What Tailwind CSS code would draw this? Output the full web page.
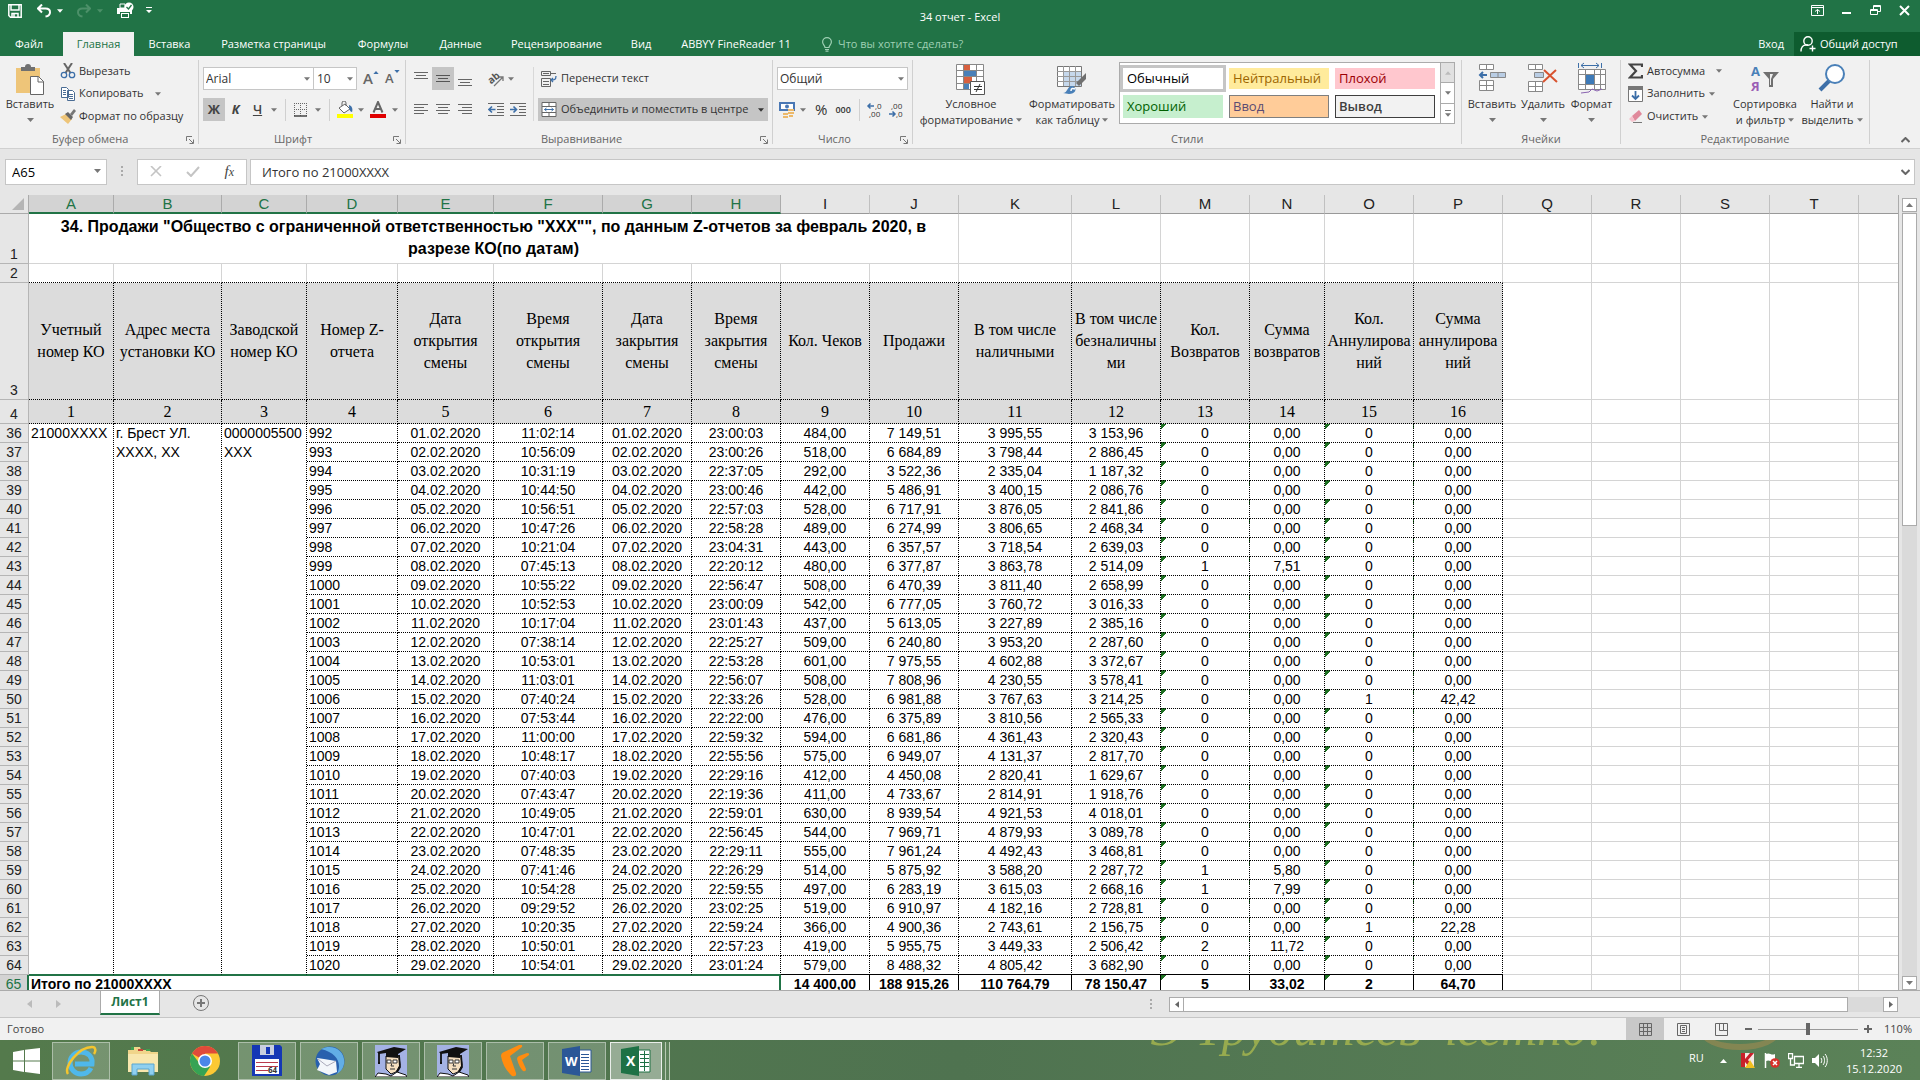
<!DOCTYPE html>
<html lang="ru">
<head>
<meta charset="utf-8">
<title>34 отчет - Excel</title>
<script src="https://cdn.jsdelivr.net/npm/@tailwindcss/browser@4"></script>
</head>
<body class="flex h-screen flex-col overflow-hidden bg-[#e6e6e6] font-['Open_Sans',sans-serif] text-[11px] text-[#333]">
<svg class="hidden">
  <symbol id="dn" viewBox="0 0 7 4"><path d="M0 0h7L3.5 4z" fill="currentColor"/></symbol>
  <symbol id="launch" viewBox="0 0 8 8"><path d="M.5 5V.5H6M3 3l4 4M7.500 3.500v4h-4" fill="none" stroke="#777"/></symbol>
</svg>

<header class="shrink-0 bg-[#217346] text-white">
  <div class="grid h-8 grid-cols-[1fr_auto_1fr] items-center">
    <div class="flex items-center self-start pt-[2px] pl-2">
      <button aria-label="Сохранить" class="mr-[15px]"><svg class="h-[14px] w-[14px]" viewBox="0 0 14 14" fill="none" stroke="#fff" stroke-width="1.500"><path d="M.8.800h12.400v12.400H2.500L.8 11.500zM3 1v5h8V1M4 13V9.500h6V13M6 10v3"/></svg></button>
      <button aria-label="Отменить" class="mr-[6px]"><svg class="h-[14px] w-[14px]" viewBox="0 0 14 14" fill="none" stroke="#fff" stroke-width="2"><path d="M1 4.500h7.500c6 0 6 7 0 8M5 .5L1 4.500l4 4"/></svg></button>
      <svg class="mr-[14px] h-1 w-[6px]"><use href="#dn"/></svg>
      <button aria-label="Вернуть" class="mr-[6px] text-[#4c9069]"><svg class="h-[14px] w-[14px]" viewBox="0 0 14 14" fill="none" stroke="currentColor" stroke-width="2"><path d="M13 4.500H5.500c-6 0-6 7 0 8M9 .5l4 4-4 4"/></svg></button>
      <svg class="mr-[14px] h-1 w-[6px] text-[#4c9069]"><use href="#dn"/></svg>
      <button aria-label="Просмотр и печать" class="mr-3"><svg class="h-[17px] w-[17px]" viewBox="0 0 17 17"><path d="M0 6h15v6h-2v-2H3v2H0zM4 11h8v5H4z" fill="#fff"/><path d="M5 12h6v3H5z" fill="#217346"/><path d="M3 2h5v4H3z" fill="none" stroke="#fff"/><circle cx="12" cy="5" r="4.500" fill="#fff"/><path d="M9.500 5l2 2 3-4" fill="none" stroke="#217346" stroke-width="1.300"/></svg></button>
      <svg class="h-[7px] w-[7px]" viewBox="0 0 7 7" fill="#fff"><path d="M0 0h6v1H0zM0 3h6L3 6z"/></svg>
    </div>
    <h1 class="pt-[2px]">34 отчет - Excel</h1>
    <div class="flex items-center justify-end gap-[18px] self-start pt-[5px] pr-[10px]">
      <button aria-label="Параметры ленты"><svg class="h-[11px] w-[13px]" viewBox="0 0 13 11" fill="none" stroke="#fff"><path d="M.5.500h12v10H.5zM.5 2.500h12M6.500 9V4.500M4 6.500l2.500-2L9 6.500"/></svg></button>
      <button aria-label="Свернуть"><svg class="h-[11px] w-[10px]" viewBox="0 0 10 11"><path d="M0 7h9v2H0z" fill="#fff"/></svg></button>
      <button aria-label="Восстановить"><svg class="h-[11px] w-[11px]" viewBox="0 0 11 11" fill="none" stroke="#fff"><path d="M.5 4.500h7v5h-7zM.5 5.500h7M3.500 4V.500h7v6H8M3 1.500h7"/></svg></button>
      <button aria-label="Закрыть"><svg class="h-[11px] w-[11px]" viewBox="0 0 11 11" stroke="#fff" stroke-width="2"><path d="M1 1l9 9M10 1l-9 9"/></svg></button>
    </div>
  </div>
  <nav class="flex h-6 items-center whitespace-nowrap">
    <a href="#" class="w-[63px] pl-[15px]">Файл</a>
    <a href="#" class="flex h-6 w-[71px] items-center justify-center bg-[#f1f1f1] text-[#217346]">Главная</a>
    <a href="#" class="w-[71px] text-center">Вставка</a>
    <a href="#" class="w-[137px] text-center">Разметка страницы</a>
    <a href="#" class="w-[82px] text-center">Формулы</a>
    <a href="#" class="w-[73px] text-center">Данные</a>
    <a href="#" class="w-[119px] text-center">Рецензирование</a>
    <a href="#" class="w-[50px] text-center">Вид</a>
    <a href="#" class="w-[140px] text-center">ABBYY FineReader 11</a>
    <a href="#" class="ml-4 flex items-center gap-[6px] text-[#9fd0b4]"><svg class="h-[15px] w-[10px]" viewBox="0 0 10 15" fill="none" stroke="currentColor" stroke-width="1.200"><path d="M3 10.500c0-2-2.400-3-2.400-5.500a4.400 4.400 0 018.800 0c0 2.500-2.400 3.500-2.400 5.500zM3 12.500h4M3.500 14.200h3"/></svg>Что вы хотите сделать?</a>
    <a href="#" class="mr-[10px] ml-auto">Вход</a>
    <a href="#" class="flex h-6 w-[126px] items-center gap-1 bg-[#0e5c2f] pl-[6px]"><svg class="h-4 w-4" viewBox="0 0 16 16" fill="none" stroke="#fff" stroke-width="1.400"><circle cx="8" cy="5" r="4.200"/><path d="M1 15.500c0-4 2-6.500 5-6.500h2M12.500 9.500v6M9.500 12.500h6"/></svg>Общий доступ</a>
  </nav>
</header>

<section class="flex h-[93px] shrink-0 border-b border-[#d0d0d0] bg-[#f1f1f1] pt-1 whitespace-nowrap">
  <!-- Буфер обмена -->
  <div class="w-[198px] shrink-0">
    <div class="flex h-[71px]">
      <button class="flex w-[54px] flex-col items-center pt-1 pl-[6px]"><svg class="h-[31px] w-7 shrink-0" viewBox="0 0 28 31"><path d="M0 4h24v25H0z" fill="#eec579"/><path d="M5 3h4a3 3 0 016 0h4v4H5z" fill="#707070"/><path d="M14.500 12.500h8l5 5v13h-13z" fill="#fff" stroke="#666"/><path d="M22 12v6h6" fill="none" stroke="#666"/></svg><span class="mt-[1px] leading-4">Вставить</span><svg class="mt-[6px] h-1 w-[7px] text-[#777]"><use href="#dn"/></svg></button>
      <div class="flex flex-col pl-[6px]">
        <button class="flex h-[22px] items-center gap-[3px]"><svg class="h-4 w-4" viewBox="0 0 16 16" fill="none"><path d="M4 0l6.500 10M12 0L5.500 10" stroke="#666" stroke-width="2"/><circle cx="4" cy="12" r="2.700" stroke="#3d6fa8" stroke-width="1.300"/><circle cx="12" cy="12" r="2.700" stroke="#3d6fa8" stroke-width="1.300"/></svg>Вырезать</button>
        <button class="flex h-[23px] items-center gap-[3px]"><svg class="h-4 w-4" viewBox="0 0 16 16" fill="#fff" stroke="#4a6c94"><path d="M1.500 1.500h5l2 2v8h-7zM3 4.500h3M3 6.500h3M3 8.500h3M7.500 4.500h5l2 2v8h-7zM9 8.500h4M9 10.500h4M9 12.500h4"/></svg>Копировать<svg class="ml-2 h-1 w-[6px] text-[#777]"><use href="#dn"/></svg></button>
        <button class="flex h-[23px] items-center gap-[3px]"><svg class="h-4 w-4" viewBox="0 0 16 16"><path d="M0 8l6-3 6 5-4 5z" fill="#eec579"/><path d="M5 5l3-2 5 5-2 3z" fill="#666"/><path d="M10 5l4-5 2 2-4 5z" fill="#777"/></svg>Формат по образцу</button>
      </div>
    </div>
    <div class="flex h-[17px] items-center pl-[52px] text-[#666]">Буфер обмена<svg class="mr-1 ml-auto h-2 w-2"><use href="#launch"/></svg></div>
  </div>
  <div class="h-[84px] w-px bg-[#d0d0d0]"></div>
  <!-- Шрифт -->
  <div class="w-[206px] shrink-0">
    <div class="flex h-[71px] flex-col gap-2 pt-[7px] pl-1">
      <div class="flex h-[23px] items-center">
        <div class="relative"><select aria-label="Шрифт" class="h-[23px] w-[111px] appearance-none border border-[#c6c6c6] bg-white pl-[2px] text-xs"><option>Arial</option></select><svg class="pointer-events-none absolute top-[10px] right-1 h-1 w-[6px] text-[#777]"><use href="#dn"/></svg></div>
        <div class="relative"><select aria-label="Размер шрифта" class="h-[23px] w-[43px] appearance-none border border-l-0 border-[#c6c6c6] bg-white pl-[3px] text-xs"><option>10</option></select><svg class="pointer-events-none absolute top-[10px] right-1 h-1 w-[6px] text-[#777]"><use href="#dn"/></svg></div>
        <button class="ml-[6px] flex text-[15px] leading-[15px] font-semibold text-[#666]">A<svg class="h-[3px] w-[6px] rotate-180 text-[#3d6fa8]"><use href="#dn"/></svg></button>
        <button class="ml-[6px] flex items-start text-[13px] leading-[17px] font-semibold text-[#666]">A<svg class="h-[3px] w-[6px] text-[#3d6fa8]"><use href="#dn"/></svg></button>
      </div>
      <div class="flex h-[23px] items-center text-[#777]">
        <button class="h-[23px] w-[22px] bg-[#c5c5c5] text-[13px] font-bold text-[#444]">Ж</button>
        <button class="w-[21px] text-[13px] font-bold text-[#444] italic">К</button>
        <button class="w-[23px] text-[13px] font-semibold text-[#444] underline">Ч</button>
        <svg class="ml-[2px] h-1 w-[6px]"><use href="#dn"/></svg>
        <div class="ml-2 h-[22px] w-px bg-[#d0d0d0]"></div>
        <svg class="ml-2 h-[14px] w-[14px]" viewBox="0 0 14 14" fill="none" stroke="#666"><path d="M.5 0v13M6.500 0v13M12.500 0v13M0 .5h13M0 6.500h13" stroke-dasharray="1 1"/><path d="M0 13h13" stroke="#444" stroke-width="1.500"/></svg>
        <svg class="ml-[7px] h-1 w-[6px]"><use href="#dn"/></svg>
        <div class="ml-2 h-[22px] w-px bg-[#d0d0d0]"></div>
        <svg class="ml-[7px] h-[17px] w-4" viewBox="0 0 16 17"><path d="M2 7l6-4 5 5-6 4z" fill="#fff" stroke="#666"/><path d="M5 5V2a2 2 0 014 0v3" fill="none" stroke="#666"/><path d="M12 4c3 1 4 4 3 7-2 0-3-3-3-7" fill="#3d6fa8"/><path d="M0 13h16v4H0z" fill="#ff0"/></svg>
        <svg class="ml-[5px] h-1 w-[6px]"><use href="#dn"/></svg>
        <svg class="ml-[6px] h-[17px] w-4" viewBox="0 0 16 17"><path d="M3.500 11.500L8 1l4.500 10.500M5 8h6" fill="none" stroke="#666" stroke-width="2"/><path d="M0 13h16v4H0z" fill="#e00000"/></svg>
        <svg class="ml-[6px] h-1 w-[6px]"><use href="#dn"/></svg>
      </div>
    </div>
    <div class="flex h-[17px] items-center pl-[75px] text-[#666]">Шрифт<svg class="mr-1 ml-auto h-2 w-2"><use href="#launch"/></svg></div>
  </div>
  <div class="h-[84px] w-px bg-[#d0d0d0]"></div>
  <!-- Выравнивание -->
  <div class="w-[366px] shrink-0">
    <div class="flex h-[71px] pt-[7px]">
      <div class="flex w-[127px] flex-col gap-2 pl-1">
        <div class="flex h-[23px] items-center">
          <button aria-label="По верхнему краю" class="flex h-[23px] w-[22px] items-center justify-center"><svg class="h-[16px] w-[14px]" viewBox="0 0 14 16" stroke="#666"><path d="M0 1.500h14M2 4.500h10M0 7.500h14"/></svg></button>
          <button aria-label="По середине" class="flex h-[23px] w-[22px] items-center justify-center bg-[#c5c5c5]"><svg class="h-[16px] w-[14px]" viewBox="0 0 14 16" stroke="#555"><path d="M0 4.500h14M2 7.500h10M0 10.500h14"/></svg></button>
          <button aria-label="По нижнему краю" class="flex h-[23px] w-[22px] items-center justify-center"><svg class="h-[16px] w-[14px]" viewBox="0 0 14 16" stroke="#666"><path d="M0 8.500h14M2 11.500h10M0 14.500h14"/></svg></button>
          <button aria-label="Ориентация" class="ml-3"><svg class="h-4 w-4 overflow-visible" viewBox="0 0 16 16"><text x="0" y="11" font-size="10" font-weight="bold" fill="#555" transform="rotate(-40 5 8)">ab</text><path d="M6 15l9-9M11 6h4v4" fill="none" stroke="#777" stroke-width="1.300"/></svg></button>
          <svg class="ml-1 h-1 w-[6px] text-[#777]"><use href="#dn"/></svg>
        </div>
        <div class="flex h-[23px] items-center">
          <button aria-label="По левому краю" class="flex w-[22px] justify-center"><svg class="h-[13px] w-[14px]" viewBox="0 0 14 13" stroke="#666"><path d="M0 1.500h14M0 4.500h10M0 7.500h14M0 10.500h10"/></svg></button>
          <button aria-label="По центру" class="flex w-[22px] justify-center"><svg class="h-[13px] w-[14px]" viewBox="0 0 14 13" stroke="#666"><path d="M0 1.500h14M2 4.500h10M0 7.500h14M2 10.500h10"/></svg></button>
          <button aria-label="По правому краю" class="flex w-[22px] justify-center"><svg class="h-[13px] w-[14px]" viewBox="0 0 14 13" stroke="#666"><path d="M0 1.500h14M4 4.500h10M0 7.500h14M4 10.500h10"/></svg></button>
          <button aria-label="Уменьшить отступ" class="ml-3"><svg class="h-[13px] w-4" viewBox="0 0 16 13" fill="none" stroke="#666"><path d="M0 .5h16M9 3.500h7M9 6.500h7M9 9.500h7M0 12.500h16"/><path d="M7.500 6.500H1M4 3.500l-3 3 3 3" stroke="#3d6fa8" stroke-width="1.600"/></svg></button>
          <button aria-label="Увеличить отступ" class="ml-[6px]"><svg class="h-[13px] w-4" viewBox="0 0 16 13" fill="none" stroke="#666"><path d="M0 .5h16M9 3.500h7M9 6.500h7M9 9.500h7M0 12.500h16"/><path d="M0 6.500h6.500M3.500 3.500l3 3-3 3" stroke="#3d6fa8" stroke-width="1.600"/></svg></button>
        </div>
      </div>
      <div class="h-[54px] w-px bg-[#d8d8d8]"></div>
      <div class="flex flex-col gap-2 pl-1">
        <button class="flex h-[23px] items-center gap-1 pl-[3px]"><svg class="h-4 w-4 shrink-0" viewBox="0 0 16 16" fill="none" stroke="#666"><path d="M.5.500h9v4h-9zM10 2.500h5M.5 7.500h9v8h-9zM2 10.500h6M2 13.500h6M2 2.500h6"/><path d="M15 5c0 4-2 4-5 4M12 7l-2 2 2 2" stroke="#3d6fa8" stroke-width="1.300"/></svg>Перенести текст</button>
        <button class="flex h-[23px] w-[230px] items-center gap-1 bg-[#c5c5c5] pl-[3px]"><svg class="h-[15px] w-4 shrink-0" viewBox="0 0 15 15" fill="#fff" stroke="#666"><path d="M.5.500h14v14H.5zM.5 4.500h14M.5 10.500h14M7.500 1v3M7.500 11v3"/><path d="M3 7.500h9M5 6L3 7.500 5 9M10 6l2 1.500L10 9" stroke="#3d6fa8" fill="none"/></svg>Объединить и поместить в центре<svg class="mr-1 ml-auto h-1 w-[6px] shrink-0"><use href="#dn"/></svg></button>
      </div>
    </div>
    <div class="flex h-[17px] items-center pl-[135px] text-[#666]">Выравнивание<svg class="mr-1 ml-auto h-2 w-2"><use href="#launch"/></svg></div>
  </div>
  <div class="h-[84px] w-px bg-[#d0d0d0]"></div>
  <!-- Число -->
  <div class="w-[139px] shrink-0">
    <div class="flex h-[71px] flex-col gap-2 pt-[7px] pl-1">
      <div class="relative w-[131px]"><select aria-label="Числовой формат" class="h-[23px] w-full appearance-none border border-[#c6c6c6] bg-white pl-[2px] text-xs"><option>Общий</option></select><svg class="pointer-events-none absolute top-[10px] right-1 h-1 w-[6px] text-[#777]"><use href="#dn"/></svg></div>
      <div class="flex h-[23px] items-center pl-[2px]">
        <svg class="h-4 w-4" viewBox="0 0 16 16"><path d="M1 1h14v7H1z" fill="#fff" stroke="#4a78b5" stroke-width="2"/><circle cx="8" cy="4.500" r="2" fill="#4a78b5"/><path d="M9 7h6v2H9zM9 10h6v2H9zM4 11h5v2H4zM4 14h5v2H4zM10 13h4v2h-4z" fill="#ecb96b"/></svg>
        <svg class="ml-[5px] h-1 w-[6px] text-[#777]"><use href="#dn"/></svg>
        <button class="ml-[9px] text-[15px]">%</button>
        <button class="ml-2 text-[9px] font-semibold">000</button>
        <div class="ml-2 h-[22px] w-px bg-[#d0d0d0]"></div>
        <button aria-label="Увеличить разрядность" class="ml-[7px]"><svg class="h-4 w-[15px] overflow-visible" viewBox="0 0 15 16"><path d="M7 4H1M3.500 1.500L1 4l2.500 2.500" fill="none" stroke="#3d6fa8" stroke-width="1.500"/><text x="8" y="7" font-size="8" fill="#333">,0</text><text x="2" y="15" font-size="8" fill="#333">,00</text></svg></button>
        <button aria-label="Уменьшить разрядность" class="ml-[7px]"><svg class="h-4 w-[15px] overflow-visible" viewBox="0 0 15 16"><path d="M0 12h6M3.500 9.500L6 12l-2.500 2.500" fill="none" stroke="#3d6fa8" stroke-width="1.500"/><text x="2" y="7" font-size="8" fill="#333">,00</text><text x="7" y="15" font-size="8" fill="#333">,0</text></svg></button>
      </div>
    </div>
    <div class="flex h-[17px] items-center pl-[45px] text-[#666]">Число<svg class="mr-1 ml-auto h-2 w-2"><use href="#launch"/></svg></div>
  </div>
  <div class="h-[84px] w-px bg-[#d0d0d0]"></div>
  <!-- Стили -->
  <div class="w-[548px] shrink-0">
    <div class="flex h-[71px]">
      <button class="flex w-[116px] flex-col items-center pt-1"><svg class="h-[31px] w-[30px] shrink-0" viewBox="0 0 30 31"><path d="M.5.500h27v25H.5zM0 6.500h27M0 12.500h27M0 19.500h27M7.500 0v25M20.500 0v25" fill="#fff" stroke="#888"/><path d="M8 1h6v5H8zM8 13h8v6H8z" fill="#d8603f"/><path d="M8 7h12v5H8zM8 20h5v5H8z" fill="#4a80b8"/><path d="M14.500 17.500h14v13h-14z" fill="#fff" stroke="#555"/><path d="M18 22.500h8M18 25.500h8M24 20l-4 8" stroke="#333"/></svg><span class="mt-[1px] leading-4">Условное</span><span class="flex items-center gap-[3px] leading-4">форматирование<svg class="h-1 w-[6px] text-[#777]"><use href="#dn"/></svg></span></button>
      <button class="flex w-[86px] flex-col items-center pt-1"><svg class="h-[31px] w-[30px] shrink-0" viewBox="0 0 30 31"><path d="M.5 2.500h24v20H.5z" fill="#fff" stroke="#777"/><path d="M7 8h17v14H7z" fill="#c6d8ec"/><path d="M0 7.500h24M0 12.500h24M0 17.500h24M6.500 2v20M12.500 2v20M18.500 2v20" stroke="#999"/><path d="M29 9v6l-7 7-3-3z" fill="#707070"/><path d="M6 29c5 0 4-8 10-7 5 3 2 8-4 8z" fill="#4a80b8"/><path d="M14 27c0-3 2-3 4-2" fill="none" stroke="#fff" stroke-width="1.500"/></svg><span class="mt-[1px] leading-4">Форматировать</span><span class="flex items-center gap-[3px] leading-4">как таблицу<svg class="h-1 w-[6px] text-[#777]"><use href="#dn"/></svg></span></button>
      <div class="mt-[2px] ml-1 flex h-[62px] border border-[#ababab] bg-white text-[13px] text-black">
        <div class="grid w-[320px] grid-cols-3 gap-x-[6px] gap-y-[6px] py-[5px] pr-[5px] pl-[3px]">
          <button class="pl-1 text-left outline-3 outline-[#c5c5c5]">Обычный</button>
          <button class="bg-[#ffeb9c] pl-1 text-left text-[#9c6500]">Нейтральный</button>
          <button class="bg-[#ffc7ce] pl-1 text-left text-[#9c0006]">Плохой</button>
          <button class="bg-[#c6efce] pl-1 text-left text-[#006100]">Хороший</button>
          <button class="border border-[#7f7f7f] bg-[#ffcc99] pl-[3px] text-left text-[#5a4a72]">Ввод</button>
          <button class="border border-[#3f3f3f] bg-[#f2f2f2] pl-[3px] text-left font-semibold text-[#3f3f3f]">Вывод</button>
        </div>
        <div class="flex w-[14px] flex-col border-l border-[#ababab] text-[#777]">
          <button aria-label="Вверх" class="flex flex-1 items-center justify-center bg-[#e1e1e1] text-[#bbb]"><svg class="h-1 w-[6px] rotate-180"><use href="#dn"/></svg></button>
          <button aria-label="Вниз" class="flex flex-1 items-center justify-center border-y border-[#ababab]"><svg class="h-1 w-[6px]"><use href="#dn"/></svg></button>
          <button aria-label="Все стили" class="flex flex-1 flex-col items-center justify-center gap-[2px]"><span class="h-px w-[6px] bg-[#777]"></span><svg class="h-1 w-[6px]"><use href="#dn"/></svg></button>
        </div>
      </div>
    </div>
    <div class="flex h-[17px] items-center pl-[258px] text-[#666]">Стили</div>
  </div>
  <div class="h-[84px] w-px bg-[#d0d0d0]"></div>
  <!-- Ячейки -->
  <div class="w-[158px] shrink-0">
    <div class="flex h-[71px] pl-1">
      <button class="flex w-[52px] flex-col items-center pt-1"><svg class="h-[31px] w-[28px] shrink-0" viewBox="0 0 28 31" fill="#fff" stroke="#888"><path d="M1.500.500h14v5h-14zM8.500 0v5M1.500 16.500h14v10h-14zM8.500 16v10M1 21.500h14"/><path d="M12.500 8.500h15v5h-15zM20 8v5" fill="#b9cde4"/><path d="M9 11H2M5 8l-3 3 3 3" fill="none" stroke="#3d6fa8" stroke-width="2"/></svg><span class="mt-[1px] leading-4">Вставить</span><svg class="mt-[6px] h-1 w-[7px] text-[#777]"><use href="#dn"/></svg></button>
      <button class="flex w-[50px] flex-col items-center pt-1"><svg class="h-[31px] w-[30px] shrink-0" viewBox="0 0 30 31" fill="#fff" stroke="#888"><path d="M.5.500h14v5H.5zM7.500 0v5M.5 17.500h14v10H.5zM7.500 17v10M0 22.500h14"/><path d="M6.500 8.500h9v5h-9z" fill="#b9cde4"/><path d="M16 6l13 12M28 6L15 18" stroke="#d8532f" stroke-width="2"/></svg><span class="mt-[1px] leading-4">Удалить</span><svg class="mt-[6px] h-1 w-[7px] text-[#777]"><use href="#dn"/></svg></button>
      <button class="flex w-[47px] flex-col items-center pt-[2px]"><svg class="h-[33px] w-[28px] shrink-0" viewBox="0 0 28 33" fill="#fff" stroke="#888"><path d="M.5 7.500h27v20H.5zM0 12.500h27M0 22.500h27M7.500 7v20M16.500 7v20M22.500 7v20"/><path d="M8 13h8v9H8z" fill="#3d7ab8" stroke="none"/><path d="M3 3.500h18M6 1L3 3.500 6 6M18 1l3 2.500L18 6M.5 1v5M23.500 1v5" stroke="#3d6fa8" fill="none"/><path d="M3 31l8-1 3-3 5 2 5-2" fill="none" stroke="#8a64b0"/></svg><span class="mt-[1px] leading-4">Формат</span><svg class="mt-[6px] h-1 w-[7px] text-[#777]"><use href="#dn"/></svg></button>
    </div>
    <div class="flex h-[17px] items-center justify-center text-[#666]">Ячейки</div>
  </div>
  <div class="h-[84px] w-px bg-[#d0d0d0]"></div>
  <!-- Редактирование -->
  <div class="w-[248px] shrink-0">
    <div class="flex h-[71px]">
      <div class="flex w-[110px] flex-col pl-[7px]">
        <button class="flex h-[22px] items-center gap-1"><svg class="h-4 w-[15px]" viewBox="0 0 15 16"><path d="M14 4V1.500H2L8 8l-6 6.500h12V12" fill="none" stroke="#444" stroke-width="2.200"/></svg>Автосумма<svg class="ml-[7px] h-1 w-[6px] text-[#777]"><use href="#dn"/></svg></button>
        <button class="flex h-[23px] items-center gap-1"><svg class="h-4 w-[15px]" viewBox="0 0 15 16"><path d="M.5.500h14v15H.5z" fill="#fff" stroke="#777"/><path d="M0 0h15v4H0z" fill="#777"/><path d="M7.500 5v8M4 9.500L7.500 13 11 9.500" fill="none" stroke="#3d6fa8" stroke-width="1.800"/></svg>Заполнить<svg class="h-1 w-[6px] text-[#777]"><use href="#dn"/></svg></button>
        <button class="flex h-[23px] items-center gap-1"><svg class="h-4 w-[15px]" viewBox="0 0 15 16"><path d="M4 7l7-6 3 4-7 7z" fill="#e0899b"/><path d="M4 7L1 10l3 3 3-1z" fill="#f5c3cd"/><path d="M5 13.500h9" stroke="#777"/></svg>Очистить<svg class="h-1 w-[6px] text-[#777]"><use href="#dn"/></svg></button>
      </div>
      <button class="flex w-[68px] flex-col items-center pt-1"><svg class="h-[31px] w-[30px] shrink-0" viewBox="0 0 30 31"><text x="1" y="12" font-size="13" font-weight="bold" fill="#4a80b8">А</text><text x="1" y="27" font-size="13" font-weight="bold" fill="#9a5db5">Я</text><path d="M13 8h16l-6 7v8h-4v-8z" fill="#707070"/><path d="M20 10h3l-2 5v6h-1v-6z" fill="#eee"/></svg><span class="mt-[1px] leading-4">Сортировка</span><span class="flex items-center gap-[3px] leading-4">и фильтр<svg class="h-1 w-[6px] text-[#777]"><use href="#dn"/></svg></span></button>
      <button class="flex w-[66px] flex-col items-center pt-1"><svg class="h-[31px] w-[30px] shrink-0" viewBox="0 0 30 31"><path d="M12 17L3 26" stroke="#3d6fa8" stroke-width="4"/><circle cx="18" cy="10" r="9" fill="#fff" stroke="#4a80b8" stroke-width="2"/></svg><span class="mt-[1px] leading-4">Найти и</span><span class="flex items-center gap-[3px] leading-4">выделить<svg class="h-1 w-[6px] text-[#777]"><use href="#dn"/></svg></span></button>
    </div>
    <div class="flex h-[17px] items-center justify-center text-[#666]">Редактирование</div>
  </div>
  <div class="h-[84px] w-px bg-[#d0d0d0]"></div>
  <button aria-label="Свернуть ленту" class="mt-auto mr-[10px] mb-[5px] ml-auto"><svg class="h-[6px] w-[9px]" viewBox="0 0 9 6" fill="none" stroke="#666" stroke-width="2"><path d="M.5 5L4.500 1l4 4"/></svg></button>
</section>

<section class="flex h-[46px] shrink-0 items-center px-[5px] pb-[1px]">
  <div class="relative"><input aria-label="Имя" value="A65" class="h-[26px] w-[102px] border border-[#c6c6c6] bg-white pl-[6px] text-[13px] text-black"><svg class="absolute top-[10px] right-[6px] h-1 w-[7px] text-[#777]"><use href="#dn"/></svg></div>
  <svg class="mx-[13px] h-[11px] w-[4px]" viewBox="0 0 4 11" fill="#aaa"><path d="M1 0h2v2H1zM1 4h2v2H1zM1 8h2v2H1z"/></svg>
  <div class="flex h-[26px] w-[110px] items-center justify-between border border-[#c6c6c6] bg-white pr-3 pl-3">
    <button aria-label="Отмена"><svg class="h-[11px] w-3" viewBox="0 0 12 11" stroke="#c4c4c4" stroke-width="1.600"><path d="M1 0l10 10M11 0L1 10"/></svg></button>
    <button aria-label="Ввод"><svg class="h-[11px] w-[14px]" viewBox="0 0 14 11" fill="none" stroke="#c4c4c4" stroke-width="2"><path d="M1 6l4 4 8-9"/></svg></button>
    <button class="font-['Liberation_Serif',serif] text-[15px] leading-4 text-[#444] italic">f<span class="text-[12px]">x</span></button>
  </div>
  <div class="ml-[3px] flex h-[26px] flex-1 items-center border border-[#c6c6c6] bg-white"><input aria-label="Строка формул" value="Итого по 21000XXXX" class="h-full flex-1 bg-white pl-[11px] text-[13px] outline-none"><svg class="mr-1 h-[6px] w-[9px]" viewBox="0 0 9 6" fill="none" stroke="#666" stroke-width="2"><path d="M.5 1l4 4 4-4"/></svg></div>
</section>

<main class="flex min-h-0 flex-1 border-b border-[#ababab]">
  <div class="min-w-0 flex-1 overflow-hidden border-r border-[#ababab] bg-white">
    <table id="sheet" class="w-full table-fixed border-separate border-spacing-0 font-['Liberation_Sans',Arial,sans-serif] text-[14px] leading-[18px] whitespace-nowrap text-black"></table>
  </div>
  <div class="flex w-[21px] shrink-0 flex-col items-center bg-[#e6e6e6] pt-[3px]">
    <button aria-label="Прокрутить вверх" class="flex h-[14px] w-[15px] shrink-0 items-center justify-center border border-[#ababab] bg-white text-[#777]"><svg class="h-1 w-[7px] rotate-180"><use href="#dn"/></svg></button>
    <div class="w-[15px] flex-1 bg-[#dadada] pt-px"><div class="h-[41%] border border-[#ababab] bg-white"></div></div>
    <button aria-label="Прокрутить вниз" class="flex h-[14px] w-[15px] shrink-0 items-center justify-center border border-[#ababab] bg-white text-[#777]"><svg class="h-1 w-[7px]"><use href="#dn"/></svg></button>
  </div>
</main>

<section class="flex h-[27px] shrink-0 items-start border-b border-[#c6c6c6]">
  <div class="flex h-full items-center gap-6 pl-[27px] text-[#bbb]">
    <svg class="h-2 w-[5px]" viewBox="0 0 5 8"><path d="M5 0v8L0 4z" fill="currentColor"/></svg>
    <svg class="h-2 w-[5px]" viewBox="0 0 5 8"><path d="M0 0v8l5-4z" fill="currentColor"/></svg>
  </div>
  <button class="ml-[39px] h-6 w-[60px] border-x border-b-2 border-x-[#ababab] border-b-[#217346] bg-white text-xs font-bold text-[#217346]">Лист1</button>
  <button aria-label="Новый лист" class="mt-1 ml-[33px]"><svg class="h-4 w-4" viewBox="0 0 16 16" fill="none" stroke="#777"><circle cx="8" cy="8" r="7.500"/><path d="M8 4v8M4 8h8" stroke-width="2"/></svg></button>
  <div class="mr-[22px] ml-auto flex h-full items-center">
    <svg class="mr-4 h-[11px] w-[4px]" viewBox="0 0 4 11" fill="#aaa"><path d="M1 0h2v2H1zM1 4h2v2H1zM1 8h2v2H1z"/></svg>
    <button aria-label="Влево" class="flex h-[15px] w-[15px] items-center justify-center border border-[#ababab] bg-white text-[#666]"><svg class="h-[7px] w-1" viewBox="0 0 5 8"><path d="M5 0v8L0 4z" fill="currentColor"/></svg></button>
    <div class="flex h-[15px] w-[699px] bg-[#dadada]"><div class="w-[664px] border border-l-0 border-[#ababab] bg-white"></div></div>
    <button aria-label="Вправо" class="flex h-[15px] w-[15px] items-center justify-center border border-[#ababab] bg-white text-[#666]"><svg class="h-[7px] w-1" viewBox="0 0 5 8"><path d="M0 0v8l5-4z" fill="currentColor"/></svg></button>
  </div>
</section>

<section class="flex h-[22px] shrink-0 items-center bg-[#f1f1f1] pl-[7px] text-[#444]">
  <span>Готово</span>
  <div class="ml-auto flex h-full items-center">
    <button aria-label="Обычный" class="flex h-full w-[38px] items-center justify-center bg-[#c8c8c8]"><svg class="h-[13px] w-[13px]" viewBox="0 0 13 13" fill="none" stroke="#666"><path d="M.5.500h12v12H.5zM4.500 0v12M8.500 0v12M0 4.500h12M0 8.500h12"/></svg></button>
    <button aria-label="Разметка страницы" class="flex h-full w-[38px] items-center justify-center"><svg class="h-[13px] w-[13px]" viewBox="0 0 13 13" fill="none" stroke="#666"><path d="M.5.500h12v12H.5zM3.500 2.500h6v8h-6zM5 4.500h3M5 6.500h3M5 8.500h3"/></svg></button>
    <button aria-label="Страничный режим" class="flex h-full w-[38px] items-center justify-center"><svg class="h-[13px] w-[13px]" viewBox="0 0 13 13" fill="none" stroke="#666"><path d="M.5.500h12v12H.5zM4.500 0v7.500h4V0M8.500 7.500H12"/></svg></button>
    <button aria-label="Уменьшить" class="ml-[5px] h-[2px] w-[7px] bg-[#666]"></button>
    <div class="mx-[6px] flex h-4 w-[100px] items-center bg-[linear-gradient(#999,#999)] bg-[length:100%_1px] bg-center bg-no-repeat"><div class="mx-auto h-3 w-1 bg-[#666]"></div></div>
    <button aria-label="Увеличить"><svg class="h-2 w-2" viewBox="0 0 8 8" stroke="#666" stroke-width="2"><path d="M4 0v8M0 4h8"/></svg></button>
    <span class="mr-2 w-10 text-right">110%</span>
  </div>
</section>

<footer class="relative flex h-10 shrink-0 items-center overflow-hidden bg-linear-to-r from-[#547a4c] via-[#4f7350] to-[#5b8258] pt-px text-white">
  <div aria-hidden="true" class="absolute -top-[37px] left-[1150px] font-['Liberation_Serif',serif] text-[50px] leading-[50px] whitespace-nowrap text-[#a9b84f]/80 italic">Э Трудитесь честно!</div>
  <div class="absolute -top-[26px] left-[1700px] h-9 w-[80px] rounded-[50%] border-[6px] border-[#a08a50]/60"></div>
  <button aria-label="Пуск" class="flex w-[52px] justify-center"><svg class="h-[26px] w-[27px]" viewBox="0 0 27 26" fill="#fff"><path d="M0 4l11-2v10.500H0zM12 1.800L27 0v12.500H12zM0 13.500h11V24L0 22zM12 13.500h15V26l-15-2z"/></svg></button>
  <div class="flex items-center gap-1">
    <button aria-label="Internet Explorer" class="flex h-[38px] w-[58px] items-center justify-center border border-white/40 bg-white/20"><svg class="h-8 w-8" viewBox="0 0 32 32" fill="none"><path d="M26 23c-2 4-6 6-10 6-6 0-11-5-11-11S10 7 16 7c7 0 12 5 11 12H10" stroke="#4fb8ea" stroke-width="5"/><path d="M3 29C-2 22 14 2 27 2c4 0 4 4 2 7" stroke="#f3c52f" stroke-width="2.500"/></svg></button>
    <button aria-label="Проводник" class="flex h-[38px] w-[58px] items-center justify-center"><svg class="h-[30px] w-8" viewBox="0 0 32 30"><path d="M1 4h4l1-3h7l1 3h8l2 2h7v20H1z" fill="#f0d58a"/><path d="M4 1h3v3H4zM19 3h4v2h-4z" fill="#3f9f4f"/><path d="M11 3h5v2h-5z" fill="#c8463a"/><path d="M1 8h30v18H1z" fill="#f8e7ae"/><path d="M5 29V18h22v11h-5v-6H10v6z" fill="#8fd0f0" stroke="#5ba6d0"/></svg></button>
    <button aria-label="Google Chrome" class="flex h-[38px] w-[58px] items-center justify-center"><svg class="h-[30px] w-[30px]" viewBox="0 0 30 30"><circle cx="15" cy="15" r="15" fill="#fcc934"/><path d="M15 15L2 7.500A15 15 0 0128 7.500H15z" fill="#df4a3a"/><path d="M15 15l-5 3L2 7.500A15 15 0 0014 30l6-9z" fill="#36a354"/><circle cx="15" cy="15" r="7" fill="#fff"/><circle cx="15" cy="15" r="5.500" fill="#4a86e8"/></svg></button>
    <button aria-label="Total Commander" class="flex h-[38px] w-[58px] items-center justify-center border border-white/40 bg-white/20"><svg class="h-[31px] w-[30px]" viewBox="0 0 30 31"><path d="M0 0h28l2 2v29H0z" fill="#1537b5"/><path d="M8 0h14v10H8z" fill="#c9cfdf"/><path d="M14 2h4v7h-4z" fill="#1537b5"/><path d="M3 14h24v15H3z" fill="#fff"/><path d="M4 17.500h22M4 21.500h22M4 25.500h12" stroke="#b83a4a"/><text x="16" y="28" font-size="8" font-weight="bold" fill="#333">64</text></svg></button>
    <button aria-label="Thunderbird" class="flex h-[38px] w-[58px] items-center justify-center border border-white/40 bg-white/20"><svg class="h-8 w-8" viewBox="0 0 32 32"><circle cx="17" cy="16" r="14.500" fill="#2860ae"/><path d="M8 4c12-6 25 2 23 15-1 5-4 8-7 10 5-10 1-21-16-25" fill="#62aee6"/><path d="M4 13l7 1 12 2 1 11-8 3-12-5 3-6z" fill="#f3f6fa"/><path d="M5 14l9 7 9-5" fill="none" stroke="#aab"/></svg></button>
    <button aria-label="Эрудит" class="flex h-[38px] w-[58px] items-center justify-center border border-white/40 bg-white/20"><svg class="h-8 w-8" viewBox="0 0 32 32"><path d="M0 0h32v32H0z" fill="#a4b2e4"/><path d="M11 11h13l1 9-4 7-5 2-5-5z" fill="#f5dfc0" stroke="#111"/><path d="M2 7l17-5 12 2-8 5v4l-12-1V8L4 9z" fill="#111"/><path d="M4 8v10M3 18h2M24 10l1 12-3 5" stroke="#111" stroke-width="1.800" fill="none"/><path d="M12 15h4v3h-4zM18 15h4v3h-4z" fill="#fff" stroke="#333"/><path d="M15 24h5M17 18l-1 3h3" fill="none" stroke="#333"/><path d="M0 32l3-4 8 1 5 2 6-4 9 3 1 2z" fill="#fff" stroke="#111"/></svg></button>
    <button aria-label="Эрудит" class="flex h-[38px] w-[58px] items-center justify-center border border-white/40 bg-white/20"><svg class="h-8 w-8" viewBox="0 0 32 32"><path d="M0 0h32v32H0z" fill="#a4b2e4"/><path d="M11 11h13l1 9-4 7-5 2-5-5z" fill="#f5dfc0" stroke="#111"/><path d="M2 7l17-5 12 2-8 5v4l-12-1V8L4 9z" fill="#111"/><path d="M4 8v10M3 18h2M24 10l1 12-3 5" stroke="#111" stroke-width="1.800" fill="none"/><path d="M12 15h4v3h-4zM18 15h4v3h-4z" fill="#fff" stroke="#333"/><path d="M15 24h5M17 18l-1 3h3" fill="none" stroke="#333"/><path d="M0 32l3-4 8 1 5 2 6-4 9 3 1 2z" fill="#fff" stroke="#111"/></svg></button>
    <button aria-label="FineReader" class="flex h-[38px] w-[58px] items-center justify-center border border-white/40 bg-white/20"><svg class="h-8 w-7" viewBox="0 0 28 32" fill="#ff8c10"><path d="M0 11Q0 8 3 7L18 0q4-1 3 2L9 11l6 17q1 4-4 3Q2 23 0 11z"/><path d="M16 14q0-2 2-3l8-3q3 0 2 2l-7 5 4 9q0 3-3 2-4-4-6-12z"/></svg></button>
    <button aria-label="Word" class="flex h-[38px] w-[58px] items-center justify-center border border-white/40 bg-white/20"><svg class="h-[30px] w-[30px]" viewBox="0 0 30 30"><path d="M16 4h13v22H16z" fill="#fff" stroke="#2b5797"/><path d="M19 8.500h8M19 11.500h8M19 14.500h8M19 17.500h8M19 20.500h8M19 23.500h8" stroke="#2b5797"/><path d="M0 3l18-3v30L0 27z" fill="#2b5797"/><text x="3" y="20" font-size="13" font-weight="bold" fill="#fff">W</text></svg></button>
    <button aria-label="Excel" class="mr-1 flex h-[38px] w-[52px] items-center justify-center border border-white/80 bg-white/40 shadow-[3px_0_0_#5e825c,4px_0_0_#b8c9b4,7px_0_0_#5e825c,8px_0_0_#b8c9b4]"><svg class="h-[30px] w-[30px]" viewBox="0 0 30 30"><path d="M16 4h13v22H16z" fill="#fff" stroke="#1e7145"/><path d="M19 8.500h9M19 12.500h9M19 16.500h9M19 20.500h9M23.500 5v20" stroke="#1e7145"/><path d="M0 3l18-3v30L0 27z" fill="#1e7145"/><text x="5" y="20" font-size="14" font-weight="bold" fill="#fff">X</text></svg></button>
  </div>
  <div class="relative ml-auto flex items-center">
    <span class="pb-1">RU</span>
    <svg class="ml-4 h-1 w-[7px] rotate-180"><use href="#dn"/></svg>
    <svg class="ml-[14px] h-[15px] w-[14px]" viewBox="0 0 14 15"><path d="M0 0h13v14H0z" fill="#f3e8e4"/><path d="M0 0h4v6l5-6h4L7 7l5 7H8L4 9v5H0z" fill="#c8202a"/><path d="M9 7l5 8H4z" fill="#f0c020"/></svg>
    <svg class="ml-[9px] h-[15px] w-4" viewBox="0 0 16 15"><path d="M1.500 0v15" stroke="#fff" stroke-width="1.500"/><path d="M2 1c4-2 5 2 9 0v7c-4 2-5-2-9 0z" fill="#fff"/><circle cx="11" cy="10" r="4.800" fill="#d8302a"/><path d="M9 8l4 4M13 8l-4 4" stroke="#fff" stroke-width="1.500"/></svg>
    <svg class="ml-2 h-[15px] w-4" viewBox="0 0 16 15" fill="none" stroke="#fff"><path d="M.5.500h4v5h-4zM2.500 6v6H7M6.500 3.500h9v7h-9zM11 11v3M8 14.500h6" stroke-width="1.300"/></svg>
    <svg class="ml-2 h-[15px] w-4" viewBox="0 0 16 15"><path d="M0 5h3l4-4v13l-4-4H0z" fill="#fff"/><path d="M9 5c1 1 1 4 0 5M11 3c2 2 2 7 0 9M13 1c3 3 3 10 0 13" fill="none" stroke="#fff"/></svg>
    <div class="mr-[18px] ml-[18px] text-center leading-4">12:32<br>15.12.2020</div>
  </div>
</footer>

<script>
const widths = [29,85,108,85,91,96,109,89,89,89,89,113,89,89,75,89,89,89,89,89,89];
const heads = ['Учетный<br>номер КО','Адрес места<br>установки КО','Заводской<br>номер КО','Номер Z-<br>отчета','Дата<br>открытия<br>смены','Время<br>открытия<br>смены','Дата<br>закрытия<br>смены','Время<br>закрытия<br>смены','Кол. Чеков','Продажи','В том числе<br>наличными','В том числе<br>безналичны<br>ми','Кол.<br>Возвратов','Сумма<br>возвратов','Кол.<br>Аннулирова<br>ний','Сумма<br>аннулирова<br>ний'];
// время открытия; время закрытия; чеки; продажи; наличными; безналичными; возвраты; сумма; аннулирования; сумма
const data = `11:02:14;23:00:03;484;7 149,51;3 995,55;3 153,96
10:56:09;23:00:26;518;6 684,89;3 798,44;2 886,45
10:31:19;22:37:05;292;3 522,36;2 335,04;1 187,32
10:44:50;23:00:46;442;5 486,91;3 400,15;2 086,76
10:56:51;22:57:03;528;6 717,91;3 876,05;2 841,86
10:47:26;22:58:28;489;6 274,99;3 806,65;2 468,34
10:21:04;23:04:31;443;6 357,57;3 718,54;2 639,03
07:45:13;22:20:12;480;6 377,87;3 863,78;2 514,09;1;7,51
10:55:22;22:56:47;508;6 470,39;3 811,40;2 658,99
10:52:53;23:00:09;542;6 777,05;3 760,72;3 016,33
10:17:04;23:01:43;437;5 613,05;3 227,89;2 385,16
07:38:14;22:25:27;509;6 240,80;3 953,20;2 287,60
10:53:01;22:53:28;601;7 975,55;4 602,88;3 372,67
11:03:01;22:56:07;508;7 808,96;4 230,55;3 578,41
07:40:24;22:33:26;528;6 981,88;3 767,63;3 214,25;0;0,00;1;42,42
07:53:44;22:22:00;476;6 375,89;3 810,56;2 565,33
11:00:00;22:59:32;594;6 681,86;4 361,43;2 320,43
10:48:17;22:55:56;575;6 949,07;4 131,37;2 817,70
07:40:03;22:29:16;412;4 450,08;2 820,41;1 629,67
07:43:47;22:19:36;411;4 733,67;2 814,91;1 918,76
10:49:05;22:59:01;630;8 939,54;4 921,53;4 018,01
10:47:01;22:56:45;544;7 969,71;4 879,93;3 089,78
07:48:35;22:29:11;555;7 961,24;4 492,43;3 468,81
07:41:46;22:26:29;514;5 875,92;3 588,20;2 287,72;1;5,80
10:54:28;22:59:55;497;6 283,19;3 615,03;2 668,16;1;7,99
09:29:52;23:02:25;519;6 910,97;4 182,16;2 728,81
10:20:35;22:59:24;366;4 900,36;2 743,61;2 156,75;0;0,00;1;22,28
10:50:01;22:57:23;419;5 955,75;3 449,33;2 506,42;2;11,72
10:54:01;23:01:24;579;8 488,32;4 805,42;3 682,90`.split('\n').map(r => r.split(';'));
const th = 'border-r border-b border-[#b5b5b5] bg-[#e6e6e6] p-0 align-bottom font-normal text-[#222]';
const grid = 'border-r border-b border-[#d4d4d4] p-0';
const dot = 'border-r border-b border-dotted border-black p-0';
const dotGray = dot + ' bg-[#dcdcdc] text-center text-[16px] leading-[22px] font-["Liberation_Serif","Times_New_Roman",serif]';
const flag = ' bg-[linear-gradient(135deg,#1e7022_4px,transparent_4px)]';
const td = (c, v = '', extra = '') => `<td class='${c}' ${extra}>${v}</td>`;
const rep = (n, f) => Array.from({length: n}, (_, i) => f(i)).join('');
const tail = rep(4, () => td(grid)) + td('border-b border-[#d4d4d4] p-0');
let h = '<colgroup>' + widths.map(w => `<col style="width:${w}px">`).join('') + '<col></colgroup>';
h += `<thead><tr class="h-[19px]"><th class="border-r border-b border-[#ababab] bg-[#e6e6e6] p-0"><svg class="mr-1 ml-auto h-3 w-3" viewBox="0 0 12 12"><path d="M12 0v12H0z" fill="#b5b5b5"/></svg></th>` +
  [...'ABCDEFGHIJKLMNOPQRST'].map((l, i) => i < 8
    ? `<th class="border-r border-b-2 border-r-[#ababab] border-b-[#217346] bg-[#d3d3d3] p-0 text-[15px] leading-[17px] font-normal text-[#217346]">${l}</th>`
    : `<th class="border-r border-b border-r-[#c0c0c0] border-b-[#999] bg-[#e6e6e6] p-0 text-[15px] font-normal text-[#222]">${l}</th>`).join('') +
  `<th class="border-b border-[#999] bg-[#e6e6e6] p-0"></th></tr></thead><tbody>`;
h += `<tr class="h-[50px]"><th class="${th}">1</th>` + td('border-r border-b border-[#d4d4d4] px-0 pt-[2px] pb-0 text-center align-top text-[16px] leading-[22px] font-bold', '34. Продажи "Общество с ограниченной ответственностью "XXX"", по данным Z-отчетов за февраль 2020, в<br>разрезе КО(по датам)', 'colspan="10"') + rep(6, () => td(grid)) + tail + '</tr>';
h += `<tr class="h-[19px]"><th class="${th}">2</th>` + rep(16, () => td('border-r border-b border-r-[#d4d4d4] border-b-black [border-bottom-style:dotted] p-0')) + tail + '</tr>';
h += `<tr class="h-[117px]"><th class="${th}">3</th>` + heads.map(t => td(dotGray, t)).join('') + tail + '</tr>';
h += `<tr class="h-[24px]"><th class="${th}">4</th>` + rep(16, i => td(dotGray, i + 1)) + tail + '</tr>';
data.forEach((r, k) => {
  const last = k === data.length - 1;
  const left = (last ? 'border-r border-b border-r-black border-b-[#217346] [border-right-style:dotted] p-0' : dot);
  const c = left + ' text-center';
  const n = (last ? 'border-r border-b border-black [border-right-style:dotted] p-0' : dot) + ' text-center';
  const side = 'border-r border-b border-r-black border-b-[#217346] [border-right-style:dotted] p-0 pl-[2px] align-top leading-[19px]';
  const date = String(k + 1).padStart(2, '0') + '.02.2020';
  h += `<tr class="h-[19px]"><th class="${th}">${36 + k}</th>`;
  if (!k) h += td(side, '21000XXXX', 'rowspan="29"') + td(side, 'г. Брест УЛ.<br>XXXX, XX', 'rowspan="29"') + td(side, '0000005500<br>XXX', 'rowspan="29"');
  h += td(left + ' pl-[2px]', 992 + k) + td(c, date) + td(c, r[0]) + td(c, date) + td(c, r[1]) + td(n, r[2] + ',00') + td(n, r[3]) + td(n, r[4]) + td(n, r[5]) +
    td(n + flag, r[6] || 0) + td(n, r[7] || '0,00') + td(n + flag, r[8] || 0) + td(n, r[9] || '0,00') + tail + '</tr>';
});
const sum = 'border-r border-b border-black p-0 text-center font-bold';
h += `<tr class="h-[19px]"><th class="border-r-2 border-b border-r-[#217346] border-b-[#b5b5b5] bg-[#d3d3d3] p-0 font-normal text-[#217346]">65</th>` +
  td('border-t border-r-2 border-[#217346] p-0 pl-[2px] align-top font-bold leading-[17px]', 'Итого по 21000XXXX', 'colspan="8"') +
  ['14 400,00','188 915,26','110 764,79','78 150,47','5','33,02','2','64,70'].map((v, i) => td(sum + (i === 4 || i === 6 ? flag : ''), v)).join('') + tail + '</tr></tbody>';
document.getElementById('sheet').innerHTML = h;
</script>
</body>
</html>
